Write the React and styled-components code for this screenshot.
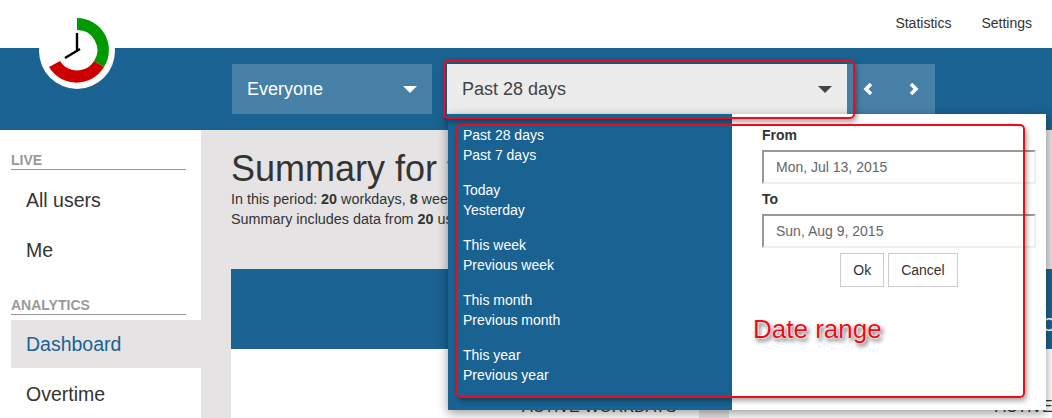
import React from 'react';
import styled, { createGlobalStyle } from 'styled-components';

const blue = '#1a6292';
const grey = '#e5e3e4';
const red = '#ee0b1a';

const Global = createGlobalStyle`
  html, body {
    margin: 0;
    padding: 0;
    height: 418px;
    overflow: hidden;
    background: #fff;
    font-family: "Liberation Sans", Arial, sans-serif;
    color: #333;
  }
`;

const Page = styled.div`
  position: relative;
  width: 1052px;
  height: 418px;
  overflow: hidden;
`;

const TopLinks = styled.nav`
  height: 48px;
  display: flex;
  justify-content: flex-end;
  align-items: center;
  gap: 30px;
  padding-right: 20px;
  box-sizing: border-box;
  font-size: 14px;
  a { color: #333; position: relative; top: -1px; }
`;

const Toolbar = styled.div`
  height: 82px;
  background: ${blue};
  box-sizing: border-box;
  padding: 16px 0 0 232px;
  display: flex;
`;

const UserSelect = styled.div`
  width: 200px;
  height: 50px;
  background: #4780a7;
  color: #fff;
  font-size: 18px;
  display: flex;
  align-items: center;
  justify-content: space-between;
  padding: 0 15px;
  box-sizing: border-box;
`;

const Caret = styled.span`
  width: 0;
  height: 0;
  border-left: 7px solid transparent;
  border-right: 7px solid transparent;
  border-top: 7px solid ${p => p.$color};
`;

const RangeSelect = styled(UserSelect)`
  width: 400px;
  margin-left: 15px;
  background: #ececec;
  color: #444;
  box-shadow: 0 0 6px rgba(0, 0, 0, 0.35);
`;

const Pager = styled.div`
  width: 88px;
  height: 50px;
  background: #4780a7;
  display: flex;
  align-items: center;
  justify-content: space-between;
  padding: 0 16px;
  box-sizing: border-box;
  svg { display: block; }
`;

const Body = styled.div`
  display: flex;
  height: 288px;
`;

const Sidebar = styled.aside`
  width: 201px;
  flex: none;
  padding: 23px 0 0 11px;
  box-sizing: border-box;
`;

const SectionTitle = styled.div`
  width: 175px;
  height: 16px;
  line-height: 15px;
  font-size: 14px;
  font-weight: bold;
  color: #999;
  border-bottom: 1px solid #999;
  margin-top: ${p => p.$top || 0}px;
  margin-bottom: ${p => p.$bottom || 0}px;
`;

const NavItem = styled.div`
  height: 48px;
  line-height: 48px;
  padding-left: 15px;
  margin-bottom: 2px;
  font-size: 19.5px;
  color: ${p => (p.$active ? blue : '#333')};
  background: ${p => (p.$active ? grey : 'transparent')};
`;

const Main = styled.main`
  flex: 1;
  background: ${grey};
  padding: 19px 0 0 30px;
  min-width: 0;
`;

const Heading = styled.h1`
  margin: 0;
  font-size: 36px;
  font-weight: normal;
  line-height: 40px;
  white-space: nowrap;
`;

const Meta = styled.p`
  margin: 0;
  font-size: 14.35px;
  line-height: 20px;
  white-space: nowrap;
`;

const Cards = styled.div`
  margin-top: 40px;
  display: flex;
  gap: 30px;
`;

const Card = styled.section`
  width: ${p => p.$width}px;
  flex: none;
  height: 149px;
  background: #fff;
`;

const CardHead = styled.div`
  height: 80px;
  background: ${blue};
  color: #fff;
  font-size: 18px;
  line-height: 112px;
  padding-left: 313px;
  white-space: nowrap;
  overflow: hidden;
`;

const CardLabel = styled.div`
  margin-top: 48px;
  font-size: 16px;
  line-height: 20px;
  padding-left: ${p => p.$left}px;
  white-space: nowrap;
`;

const Dropdown = styled.div`
  position: absolute;
  left: 448px;
  top: 114px;
  width: 598px;
  height: 296px;
  display: flex;
  background: #fff;
  box-shadow: 0 3px 10px rgba(0, 0, 0, 0.4);
`;

const Presets = styled.div`
  width: 284px;
  flex: none;
  background: ${blue};
  padding: 11px 0 0 15px;
  box-sizing: border-box;
`;

const PresetGroup = styled.div`
  margin-bottom: 15px;
`;

const Preset = styled.div`
  height: 20px;
  line-height: 20px;
  font-size: 14px;
  color: #fff;
`;

const DateForm = styled.form`
  flex: 1;
  padding: 11px 10px 0 30px;
`;

const Label = styled.div`
  height: 20px;
  line-height: 20px;
  font-size: 14px;
  font-weight: bold;
  margin-bottom: 5px;
`;

const DateField = styled.div`
  height: 34px;
  line-height: 30px;
  box-sizing: border-box;
  padding-left: 12px;
  font-size: 14px;
  color: #666;
  border: 2px solid #eee;
  border-top-color: #999;
  border-left-color: #999;
  margin-bottom: 5px;
`;

const Buttons = styled.div`
  display: flex;
  justify-content: center;
  gap: 4px;
`;

const Button = styled.div`
  height: 34px;
  line-height: 32px;
  box-sizing: border-box;
  padding: 0 12px;
  font-size: 14px;
  border: 1px solid #ccc;
`;

const Callout = styled.div`
  position: absolute;
  border: 2px solid ${red};
  border-radius: 5px;
  box-sizing: border-box;
  box-shadow: 2px 3px 5px rgba(0, 0, 0, 0.35);
`;

const RangeCallout = styled(Callout)`
  left: 443px;
  top: 60px;
  width: 412px;
  height: 59px;
`;

const PanelCallout = styled(Callout)`
  left: 456px;
  top: 124px;
  width: 569px;
  height: 274px;
`;

const CalloutText = styled.div`
  position: absolute;
  left: 753px;
  top: 315px;
  font-size: 26px;
  line-height: 28px;
  color: ${red};
  text-shadow: 0 0 1px #fff, 0 0 2px #fff, 0 0 2px #fff, 2px 3px 4px rgba(0, 0, 0, 0.7);
`;

const LogoWrap = styled.div`
  position: absolute;
  left: 39px;
  top: 10px;
  width: 76px;
  height: 79px;
`;

const Logo = () => (
  <LogoWrap>
    <svg width="76" height="79" viewBox="0 0 76 79">
      <circle cx="38" cy="41" r="38" fill="#fff" />
      <path d="M38 8 A32 32 0 0 1 65 57 L55 51 A20 20 0 0 0 38 20 Z" fill="#009a00" />
      <path d="M65 57 A32 32 0 0 1 10 57 L21 51 A20 20 0 0 0 55 51 Z" fill="#cc0000" />
      <path d="M38 23 V41 M41 39 L26 48" fill="none" stroke="#000" strokeWidth="2.4" />
    </svg>
  </LogoWrap>
);

const Chevron = ({ dir }) => (
  <svg width="10" height="12" viewBox="0 0 10 12">
    <path
      d={dir === 'left' ? 'M8 1 L3 6 L8 11' : 'M2 1 L7 6 L2 11'}
      fill="none"
      stroke="#fff"
      strokeWidth="3.5"
    />
  </svg>
);

const presetGroups = [
  ['Past 28 days', 'Past 7 days'],
  ['Today', 'Yesterday'],
  ['This week', 'Previous week'],
  ['This month', 'Previous month'],
  ['This year', 'Previous year'],
];

export default function App() {
  return (
    <Page>
      <Global />
      <TopLinks>
        <a>Statistics</a>
        <a>Settings</a>
      </TopLinks>
      <Toolbar>
        <UserSelect>Everyone <Caret $color="#fff" /></UserSelect>
        <RangeSelect>Past 28 days <Caret $color="#444" /></RangeSelect>
        <Pager>
          <Chevron dir="left" />
          <Chevron dir="right" />
        </Pager>
      </Toolbar>
      <Body>
        <Sidebar>
          <SectionTitle $bottom={6}>LIVE</SectionTitle>
          <NavItem>All users</NavItem>
          <NavItem>Me</NavItem>
          <SectionTitle $top={24} $bottom={5}>ANALYTICS</SectionTitle>
          <NavItem $active>Dashboard</NavItem>
          <NavItem>Overtime</NavItem>
        </Sidebar>
        <Main>
          <Heading>Summary for the period</Heading>
          <Meta>In this period: <b>20</b> workdays, <b>8</b> weekend days</Meta>
          <Meta>Summary includes data from <b>20</b> users</Meta>
          <Cards>
            <Card $width={468}>
              <CardHead />
              <CardLabel $left={291}>ACTIVE WORKDAYS</CardLabel>
            </Card>
            <Card $width={400}>
              <CardHead>CHART</CardHead>
              <CardLabel $left={266}>ACTIVE</CardLabel>
            </Card>
          </Cards>
        </Main>
      </Body>
      <Logo />
      <Dropdown>
        <Presets>
          {presetGroups.map(group => (
            <PresetGroup key={group[0]}>
              {group.map(name => <Preset key={name}>{name}</Preset>)}
            </PresetGroup>
          ))}
        </Presets>
        <DateForm>
          <Label>From</Label>
          <DateField>Mon, Jul 13, 2015</DateField>
          <Label>To</Label>
          <DateField>Sun, Aug 9, 2015</DateField>
          <Buttons>
            <Button>Ok</Button>
            <Button>Cancel</Button>
          </Buttons>
        </DateForm>
      </Dropdown>
      <RangeCallout />
      <PanelCallout />
      <CalloutText>Date range</CalloutText>
    </Page>
  );
}
